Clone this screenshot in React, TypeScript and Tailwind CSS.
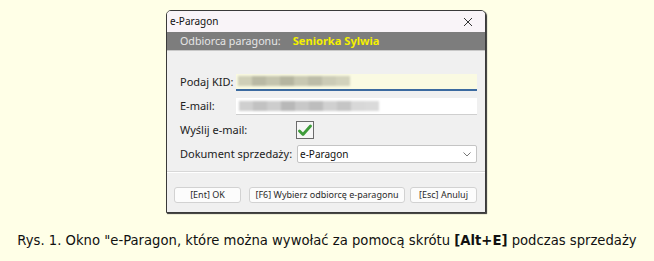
const dialogFont = { fontFamily: '"Noto Sans", "Open Sans", sans-serif' };

const Pixelated = ({ widths }: { widths: string[] }) => (
  <div className="flex h-[10px] blur-[1px]">
    {widths.map((c, i) => (
      <div key={i} className={`h-full w-[14px] ${c}`} />
    ))}
  </div>
);

const Row = ({ label, labelWidth, children }: { label: string; labelWidth: string; children: React.ReactNode }) => (
  <div className="flex items-center h-[18px]">
    <span className={`${labelWidth} shrink-0 whitespace-nowrap text-[11px] text-[#222]`}>{label}</span>
    {children}
  </div>
);

const FooterButton = ({ text, className }: { text: string; className: string }) => (
  <button
    className={`h-[16px] whitespace-nowrap rounded-[3px] border border-[#d2d2d2] bg-[#fcfcfc] text-[9px] leading-none text-[#2a2a2a] ${className}`}
  >
    {text}
  </button>
);

export default function App() {
  return (
    <div className="w-[654px] h-[261px] bg-[#ffffe7] flex flex-col items-center">
      <div
        className="mt-[10px] w-[320px] h-[203px] ml-[-2px] flex flex-col border border-[#3a3a3a] rounded-t-[5px] shadow-[1px_1px_1px_#333] bg-[#f0f0f0] overflow-hidden"
        style={dialogFont}
      >
        <div className="h-[21px] shrink-0 bg-[#f9f4f8] flex items-center justify-between pl-[3px] pr-[3px]">
          <span className="text-[10px] text-[#111]">e-Paragon</span>
          <svg width="10" height="10" viewBox="0 0 10 10" className="mr-[9px]">
            <path d="M1 1 L9 9 M9 1 L1 9" stroke="#333" strokeWidth="1" />
          </svg>
        </div>
        <div className="h-[19px] shrink-0 bg-[#7d7d7d] flex items-center pl-[13px] gap-[12px] border-b border-[#c8c8c8]">
          <span className="text-[10.7px] text-[#e6e6e6]">Odbiorca paragonu:</span>
          <span className="text-[11.1px] font-bold text-[#f5f000]">Seniorka Sylwia</span>
        </div>

        <div className="flex flex-col gap-[6px] pl-[13px] pr-[8px] pt-[22px] pb-[8px] border-b border-[#d8d8d8]">
          <Row label="Podaj KID:" labelWidth="w-[56px]">
            <div className="flex-1 h-[17px] bg-[#fafae2] border-b-2 border-[#3b6aa0] flex items-center pl-[2px]">
              <Pixelated widths={["bg-[#cfcfb8]", "bg-[#b9b9a4]", "bg-[#c4c4ae]", "bg-[#b5b5a0]", "bg-[#c8c8b2]", "bg-[#bcbca8]", "bg-[#cbcbb6]", "bg-[#d2d2bc]"]} />
            </div>
          </Row>
          <Row label="E-mail:" labelWidth="w-[56px]">
            <div className="flex-1 h-[17px] bg-white border-b border-[#cfcfcf] flex items-center pl-[3px]">
              <Pixelated widths={["bg-[#cfcfcf]", "bg-[#c2c2c2]", "bg-[#cdcdcd]", "bg-[#b8b8b8]", "bg-[#c8c8c8]", "bg-[#bdbdbd]", "bg-[#d0d0d0]", "bg-[#c5c5c5]", "bg-[#d8d8d8]", "bg-[#dadada]"]} />
            </div>
          </Row>
          <Row label="Wyślij e-mail:" labelWidth="w-[116px]">
            <div className="w-[18px] h-[18px] border border-[#6b6b6b] bg-[#f7f7f7] flex items-center justify-center">
              <svg width="14" height="13" viewBox="0 0 14 13">
                <path d="M1.5 7 L5 10.5 L12.5 2" fill="none" stroke="#3e9c3a" strokeWidth="2.8" strokeLinecap="round" strokeLinejoin="round" />
              </svg>
            </div>
          </Row>
          <Row label="Dokument sprzedaży:" labelWidth="w-[117px]">
            <div className="flex-1 h-[18px] bg-white border border-[#c4c4c4] rounded-[2px] flex items-center justify-between pl-[2px] pr-[5px]">
              <span className="text-[10px] text-[#111]">e-Paragon</span>
              <svg width="8" height="5" viewBox="0 0 8 5">
                <path d="M0.5 0.5 L4 4 L7.5 0.5" fill="none" stroke="#777" strokeWidth="1" />
              </svg>
            </div>
          </Row>
        </div>

        <div className="flex-1 border-t border-white flex items-center gap-[8px] pl-[7px] pt-[4px]">
          <FooterButton text="[Ent] OK" className="w-[67px]" />
          <FooterButton text="[F6] Wybierz odbiorcę e-paragonu" className="w-[156px]" />
          <FooterButton text="[Esc] Anuluj" className="w-[67px] ml-[-3px]" />
        </div>
      </div>

      <p
        className="mt-[20px] text-[13.2px] leading-[16px] text-[#111] whitespace-nowrap"
        style={{ fontFamily: '"DejaVu Sans", Verdana, sans-serif' }}
      >
        Rys. 1. Okno "e-Paragon, które można wywołać za pomocą skrótu <b>[Alt+E]</b> podczas sprzedaży
      </p>
    </div>
  );
}
